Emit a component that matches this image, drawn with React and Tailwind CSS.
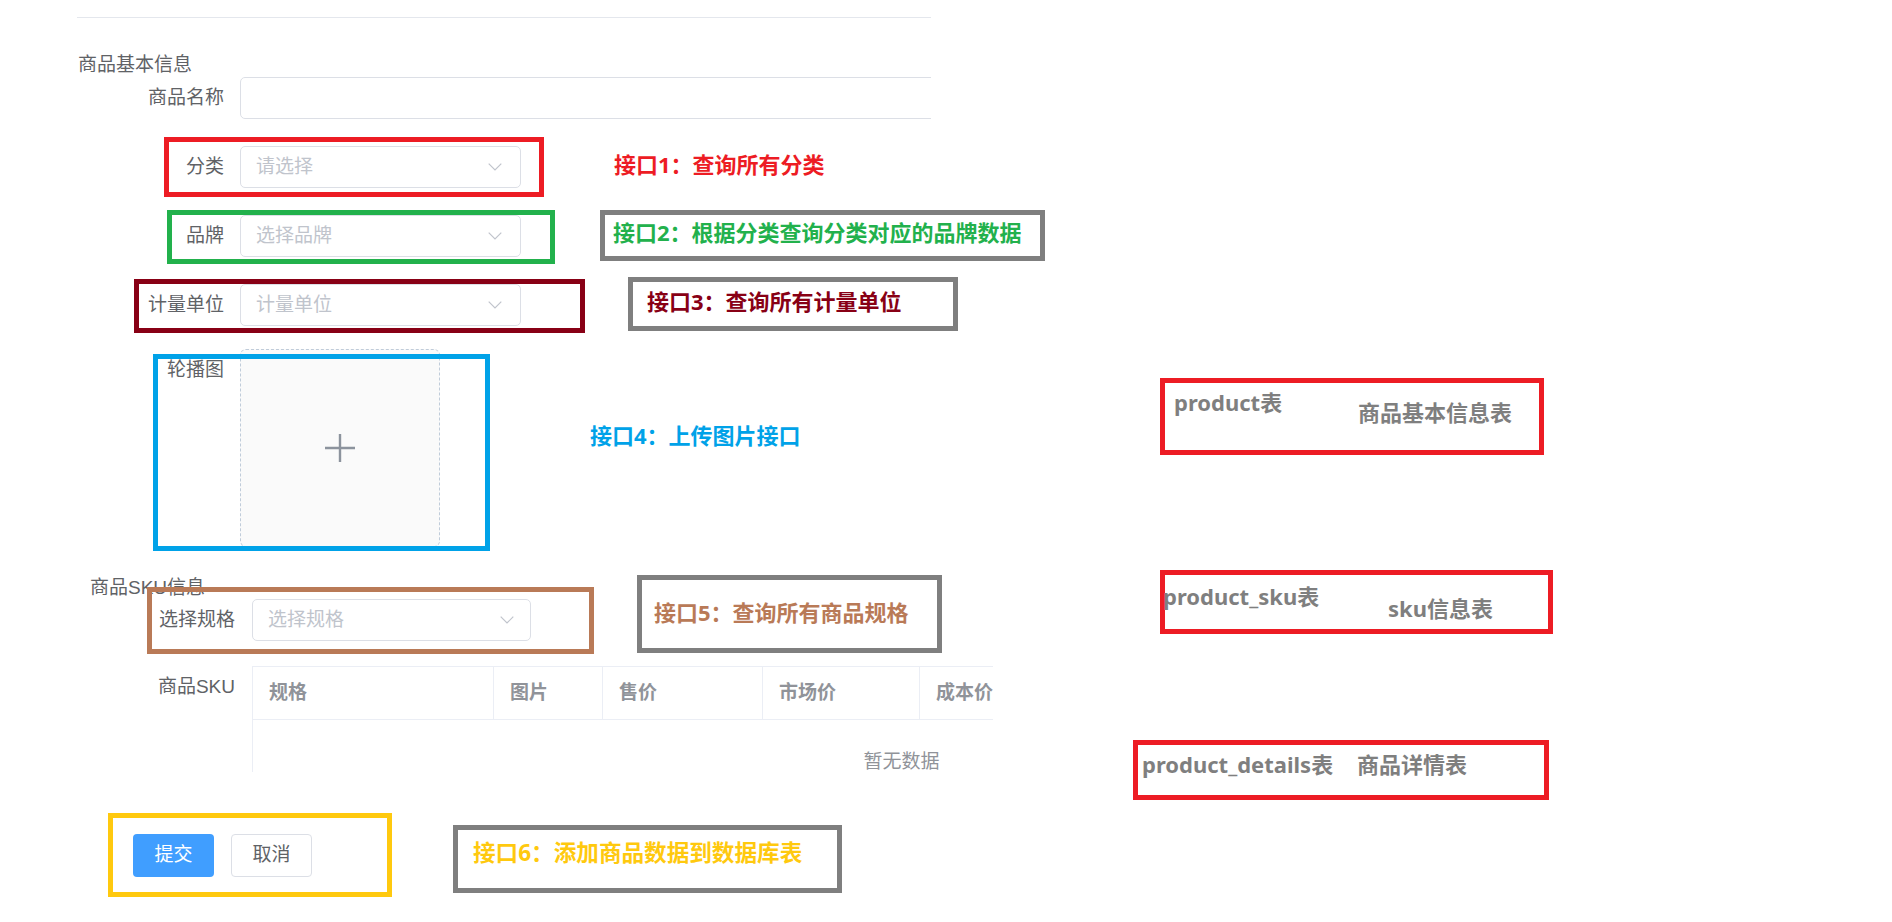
import React from "react";

function Chevron() {
  return (
    <svg width="14" height="8" viewBox="0 0 14 8" fill="none">
      <path d="M0.7 0.7 L7 7 L13.3 0.7" stroke="#c0c4cc" strokeWidth="1.2" />
    </svg>
  );
}

function Select({ placeholder, wide }) {
  return (
    <div
      className={
        (wide ? "w-[281px] pr-[18px]" : "w-[279px] pr-[16px]") +
        " h-[42px] shrink-0 border border-[#dcdfe6] rounded-[5px] bg-white flex items-center justify-between pl-[15px]"
      }
    >
      <span className="text-[#c0c4cc]">{placeholder}</span>
      <Chevron />
    </div>
  );
}

function Label({ children }) {
  return <div className="w-[147px] shrink-0 text-right h-[42px] leading-[42px]">{children}</div>;
}

function SkuLabel({ children }) {
  return <div className="w-[146px] shrink-0 text-right h-[42px] leading-[42px]">{children}</div>;
}

function Th({ w, children }) {
  return (
    <div
      className={
        w +
        " shrink-0 h-[53px] border-r border-b border-[#ebeef5] pl-[16px] flex items-center font-bold text-[#909399] whitespace-nowrap"
      }
    >
      {children}
    </div>
  );
}

export default function App() {
  return (
    <div className="relative w-[1892px] h-[922px] overflow-hidden bg-white font-['Liberation_Sans','Noto_Sans_CJK_SC',sans-serif]">
      {/* form in flow */}
      <div className="pt-[17px] pl-[77px] text-[19px] text-[#606266]">
        <div className="w-[854px] h-px bg-[#e4e7ed]" />
        <div className="mt-[34px] h-[25px] leading-[25px] pl-px">商品基本信息</div>

        <div className="w-[854px] overflow-hidden">
          <div className="flex gap-[16px] h-[42px]">
            <Label>商品名称</Label>
            <div className="w-[800px] h-[42px] shrink-0 border border-[#dcdfe6] rounded-[5px] bg-white" />
          </div>
        </div>

        <div className="mt-[27px] flex flex-col gap-[27px]">
          <div className="flex gap-[16px]">
            <Label>分类</Label>
            <Select placeholder="请选择" wide />
          </div>
          <div className="flex gap-[16px]">
            <Label>品牌</Label>
            <Select placeholder="选择品牌" wide />
          </div>
          <div className="flex gap-[16px]">
            <Label>计量单位</Label>
            <Select placeholder="计量单位" wide />
          </div>
        </div>
        <div className="mt-[23px] flex gap-[16px]">
          <Label>轮播图</Label>
          <div className="w-[200px] h-[198px] border border-dashed border-[#c0ccda] rounded-[6px] bg-[#fafafa] flex items-center justify-center">
            <svg width="32" height="30" viewBox="0 0 32 30" fill="none">
              <path d="M1 15 H31 M16 1 V29" stroke="#8c939d" strokeWidth="2.4" />
            </svg>
          </div>
        </div>

        {/* SKU section */}
        <div className="ml-[12px] mt-[29px]">
          <div className="h-[23px] leading-[23px] pl-px">商品SKU信息</div>
          <div className="flex gap-[17px]">
            <SkuLabel>选择规格</SkuLabel>
            <Select placeholder="选择规格" />
          </div>
          <div className="mt-[25px] flex gap-[17px]">
            <SkuLabel>商品SKU</SkuLabel>
            <div className="w-[741px] h-[106px] overflow-hidden">
              <div className="w-[1298px] border-l border-t border-[#ebeef5]">
                <div className="flex">
                  <Th w="w-[241px]">规格</Th>
                  <Th w="w-[109px]">图片</Th>
                  <Th w="w-[160px]">售价</Th>
                  <Th w="w-[157px]">市场价</Th>
                  <Th w="w-[157px]">成本价</Th>
                  <div className="flex-1 h-[53px] border-b border-[#ebeef5]" />
                </div>
                <div className="h-[84px] flex items-center justify-center text-[#909399]">暂无数据</div>
              </div>
            </div>
          </div>
        </div>

        {/* buttons */}
        <div className="mt-[62px] ml-[56px] flex gap-[17px]">
          <div className="w-[81px] h-[43px] rounded-[4px] bg-[#409eff] text-white flex items-center justify-center">提交</div>
          <div className="w-[81px] h-[43px] rounded-[4px] border border-[#dcdfe6] bg-white text-[#606266] flex items-center justify-center">取消</div>
        </div>
      </div>

      {/* annotation layer drawn over the screenshot */}
      <div className="absolute inset-0 font-['Noto_Sans','Noto_Sans_CJK_SC',sans-serif] font-bold text-[22px] leading-[30px] whitespace-nowrap">
        {/* coloured frames around form items */}
        <div className="absolute left-[164px] top-[137px] w-[380px] h-[60px] border-[5px] border-[#ed1c24]" />
        <div className="absolute left-[167px] top-[210px] w-[388px] h-[54px] border-[5px] border-[#22b14c]" />
        <div className="absolute left-[134px] top-[279px] w-[451px] h-[54px] border-[5px] border-[#880015]" />
        <div className="absolute left-[153px] top-[354px] w-[337px] h-[197px] border-[5px] border-[#00a2e8]" />
        <div className="absolute left-[147px] top-[587px] w-[447px] h-[67px] border-[5px] border-[#b97a57]" />
        <div className="absolute left-[108px] top-[813px] w-[284px] h-[84px] border-[5px] border-[#ffc90e]" />

        {/* interface notes */}
        <div className="absolute left-[614px] top-[149px] text-[#ed1c24]">接口1：查询所有分类</div>
        <div className="absolute left-[600px] top-[210px] w-[445px] h-[51px] border-[5px] border-[#7f7f7f] pl-[8px] pt-[2px] text-[#22b14c]">
          接口2：根据分类查询分类对应的品牌数据
        </div>
        <div className="absolute left-[628px] top-[277px] w-[330px] h-[54px] border-[5px] border-[#7f7f7f] pl-[14px] pt-[4px] text-[#880015]">
          接口3：查询所有计量单位
        </div>
        <div className="absolute left-[590px] top-[420px] text-[#00a2e8]">接口4：上传图片接口</div>
        <div className="absolute left-[637px] top-[575px] w-[305px] h-[78px] border-[5px] border-[#7f7f7f] pl-[12px] pt-[17px] text-[#b97a57]">
          接口5：查询所有商品规格
        </div>
        <div className="absolute left-[453px] top-[825px] w-[389px] h-[68px] border-[5px] border-[#7f7f7f] pl-[15px] pt-[8px] text-[22.6px] text-[#ffc90e]">
          接口6：添加商品数据到数据库表
        </div>

        {/* table notes */}
        <div className="absolute left-[1160px] top-[378px] w-[384px] h-[77px] border-[5px] border-[#ed1c24] flex items-start pl-[9px] text-[#7f7f7f]">
          <div className="w-[184px] shrink-0 pt-[4px]">product表</div>
          <div className="pt-[14px]">商品基本信息表</div>
        </div>
        <div className="absolute left-[1160px] top-[570px] w-[393px] h-[64px] border-[5px] border-[#ed1c24] flex items-start text-[#7f7f7f]">
          <div className="w-[225px] shrink-0 ml-[-2px] pt-[6px]">product_sku表</div>
          <div className="pt-[18px]">sku信息表</div>
        </div>
        <div className="absolute left-[1133px] top-[740px] w-[416px] h-[60px] border-[5px] border-[#ed1c24] flex items-start pl-[4px] pt-[4px] text-[#7f7f7f]">
          <div className="w-[215px] shrink-0">product_details表</div>
          <div>商品详情表</div>
        </div>
      </div>
    </div>
  );
}
